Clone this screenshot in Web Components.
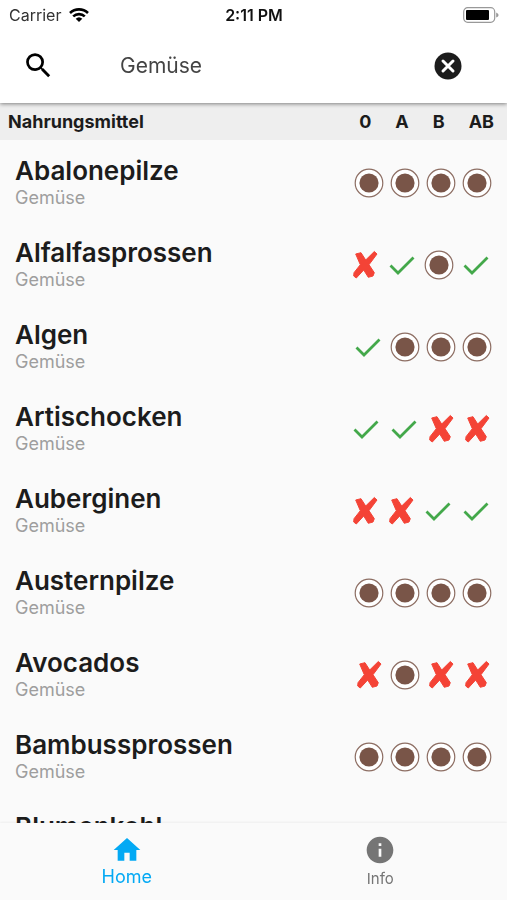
<!DOCTYPE html>
<html lang="de">
<head>
<meta charset="utf-8">
<meta name="viewport" content="width=device-width,initial-scale=1">
<title>Nahrungsmittel</title>
<style>
body {
    margin:0;
    background:#fafafa;color:#1c1c1c;
    font-family:Inter,'Liberation Sans',sans-serif;
}
</style>
</head>
<body>
<food-app>
    <status-bar slot=top carrier="Carrier" time="2:11 PM"></status-bar>
    <search-bar slot=top value="Gemüse"></search-bar>
    <food-table></food-table>
    <tab-bar slot=bottom>
        <tab-item href="#home" icon=home active>Home</tab-item>
        <tab-item href="#info" icon=info>Info</tab-item>
    </tab-bar>
</food-app>
<script>
const foods = [
    ['Abalonepilze', 'oooo'],
    ['Alfalfasprossen', 'xvov'],
    ['Algen', 'vooo'],
    ['Artischocken', 'vvxx'],
    ['Auberginen', 'xxvv'],
    ['Austernpilze', 'oooo'],
    ['Avocados', 'xoxx'],
    ['Bambussprossen', 'oooo'],
    ['Blumenkohl', 'vvoo'],
];

class FoodApp extends HTMLElement {
    constructor() {
        super();
        this.attachShadow({mode: 'open'}).innerHTML = `
        <style>
        :host {
            display:flex;flex-direction:column;
            height:100vh;
        }
        header {
            position:relative;z-index:1;
            background:#fff;
            box-shadow:0 1px 4px #0007;
        }
        main {
            flex:1;min-height:0;
            overflow-y:auto;scrollbar-width:none;
        }
        </style>
        <header><slot name=top></slot></header>
        <main><slot></slot></main>
        <slot name=bottom></slot>`;
    }
}
customElements.define('food-app', FoodApp);

class StatusBar extends HTMLElement {
    connectedCallback() {
        this.attachShadow({mode: 'open'}).innerHTML = `
        <style>
        :host {
            display:grid;grid-template-columns:1fr auto 1fr;align-items:center;
            height:30px;padding:0 8px 0 9px;
            font-size:16px;color:#333;
        }
        div {
            display:flex;align-items:center;gap:8px;
        }
        b {
            font-weight:600;color:#111;
        }
        .battery {
            justify-self:end;
        }
        svg {
            display:block;
        }
        </style>
        <div>${this.getAttribute('carrier')}
            <svg width=20 height=14 viewBox="0 0 20 14" fill=none stroke=#000 stroke-width=2.6>
                <path d="M1 5a13 13 0 0 1 18 0M4.2 8.4a8.4 8.4 0 0 1 11.6 0"/>
                <path d="M10 14l-3.3-3.3a4.8 4.8 0 0 1 6.6 0z" fill=#000 stroke=none />
            </svg>
        </div>
        <b>${this.getAttribute('time')}</b>
        <svg class=battery width=36 height=16 viewBox="0 0 36 16">
            <rect x=.7 y=.7 width=31 height=14.6 rx=4 fill=#fff stroke=#999 stroke-width=1.2 />
            <rect x=3 y=3 width=23 height=10 rx=1 />
            <path d="M33.2 5.5q2.4 1 2.4 2.5t-2.4 2.5z" fill=#999 />
        </svg>`;
    }
}
customElements.define('status-bar', StatusBar);

class SearchBar extends HTMLElement {
    connectedCallback() {
        this.attachShadow({mode: 'open'}).innerHTML = `
        <style>
        :host {
            display:flex;align-items:center;
            height:71px;padding:0 41px 2px 20px;
        }
        button {
            display:grid;place-items:center;
            width:36px;height:36px;padding:0;
            border:0;background:none;
        }
        input {
            flex:1;min-width:0;
            margin-left:64px;padding:0;
            border:0;outline:0;background:none;
            font:21px Inter,'Liberation Sans',sans-serif;color:#444;
        }
        </style>
        <button aria-label=Suchen>
            <svg width=33 height=33 viewBox="0 0 24 24"><path d="M15.5 14h-.79l-.28-.27A6.47 6.47 0 0 0 16 9.5 6.5 6.5 0 1 0 9.5 16c1.61 0 3.09-.59 4.23-1.57l.27.28v.79l5 4.99L20.49 19l-4.99-5zm-6 0C7.01 14 5 11.99 5 9.5S7.01 5 9.5 5 14 7.01 14 9.5 11.99 14 9.5 14z"/></svg>
        </button>
        <input type=text aria-label=Suche value="${this.getAttribute('value')}">
        <button class=clear aria-label=Löschen>
            <svg width=28 height=28 viewBox="0 0 28 28"><circle cx=14 cy=14 r=13.5 fill=#1c1c1c /><path d="M9 9l10 10M19 9L9 19" stroke=#fff stroke-width=3 stroke-linecap=round /></svg>
        </button>`;
        const input = this.shadowRoot.querySelector('input');
        this.shadowRoot.querySelector('.clear').onclick = () => {
            input.value = '';
            input.focus();
        };
    }
}
customElements.define('search-bar', SearchBar);

// o = neutral, v = good, x = avoid
class FoodMark extends HTMLElement {
    static shapes = {
        o: '<circle cx=14 cy=14 r=13.8 fill=#fff stroke=#8d6e63 stroke-width=1.2 /><circle cx=14 cy=14 r=9.6 fill=#795548 />',
        v: '<path d="M2.5 14.5L10 22L25.5 6.5" fill=none stroke=#43a84a stroke-width=2.8 />',
        x: '<path d="M4.7 3L10 1.7L14.7 9L23.3 .5L26 3L18 13.7L23.3 21.7L22 25L17.3 26.3L12.7 19L5.3 27L2.7 25L3 21.7L9.3 13.7Z" fill=#f44336 stroke=#f44336 stroke-linejoin=round />',
    };
    connectedCallback() {
        this.attachShadow({mode: 'open'}).innerHTML = `
        <style>
        :host {
            display:grid;place-items:center;
            width:36px;
        }
        :host([kind=v]) {
            width:38px;
        }
        </style>
        <svg width=28 height=28 viewBox="0 0 28 28" overflow=visible>${FoodMark.shapes[this.getAttribute('kind')]}</svg>`;
    }
}
customElements.define('food-mark', FoodMark);

class FoodTable extends HTMLElement {
    constructor() {
        super();
        this.attachShadow({mode: 'open'}).innerHTML = `
        <style>
        :host, table, thead, tbody {
            display:block;
        }
        tr {
            display:flex;align-items:center;
        }
        th, td {
            padding:0;
        }
        th:first-child {
            flex:1;text-align:left;
        }
        thead {
            position:sticky;top:0;
            background:#eee;
        }
        thead tr {
            gap:24px;
            height:37px;padding:0 13px 0 8px;
            font-size:18px;
        }
        thead th {
            font-weight:700;
        }
        tbody {
            padding-top:1px;
        }
        tbody tr {
            height:82px;padding:0 12px 0 15px;
        }
        td {
            padding-top:2px;
        }
        .name {
            display:block;
            font-size:26px;line-height:32px;font-weight:600;
        }
        small {
            display:block;
            font-size:18px;line-height:22px;font-weight:400;color:#9e9e9e;
        }
        </style>
        <table>
            <thead><tr><th>Nahrungsmittel</th><th>0</th><th>A</th><th>B</th><th>AB</th></tr></thead>
            <tbody>${foods.map(this.row).join('')}</tbody>
        </table>`;
    }
    row = ([name, marks]) => `<tr><th><span class=name>${name}</span><small>Gemüse</small></th>${[...marks].map(kind => `<td><food-mark kind=${kind}></food-mark></td>`).join('')}</tr>`;
}
customElements.define('food-table', FoodTable);

class TabBar extends HTMLElement {
    constructor() {
        super();
        this.attachShadow({mode: 'open'}).innerHTML = `
        <style>
        :host {
            display:block;
            position:relative;
            background:#fafafa;
            box-shadow:0 -1px 2px #0000000d;
        }
        nav {
            display:flex;
            height:77px;
        }
        </style>
        <nav><slot></slot></nav>`;
    }
}
customElements.define('tab-bar', TabBar);

class TabItem extends HTMLElement {
    static icons = {
        home: '<path d="M10 20v-6h4v6h5v-8h3L12 3 2 12h3v8z"/>',
        info: '<path d="M12 2C6.48 2 2 6.48 2 12s4.48 10 10 10 10-4.48 10-10S17.52 2 12 2zm1 15h-2v-6h2v6zm0-8h-2V7h2v2z"/>',
    };
    connectedCallback() {
        this.attachShadow({mode: 'open'}).innerHTML = `
        <style>
        :host {
            flex:1;
            font-size:15px;color:#757575;
        }
        :host([active]) {
            font-size:18px;color:#03a9f4;
        }
        a {
            display:flex;flex-direction:column;align-items:center;
            height:100%;padding-top:11px;box-sizing:border-box;
            color:inherit;text-decoration:none;
        }
        svg {
            fill:currentColor;
        }
        span {
            margin-top:2px;line-height:22px;
        }
        :host([active]) span {
            margin-top:0;
        }
        </style>
        <a href=${this.getAttribute('href')}>
            <svg width=32 height=32 viewBox="0 0 24 24">${TabItem.icons[this.getAttribute('icon')]}</svg>
            <span><slot></slot></span>
        </a>`;
    }
}
customElements.define('tab-item', TabItem);
</script>
</body>
</html>
